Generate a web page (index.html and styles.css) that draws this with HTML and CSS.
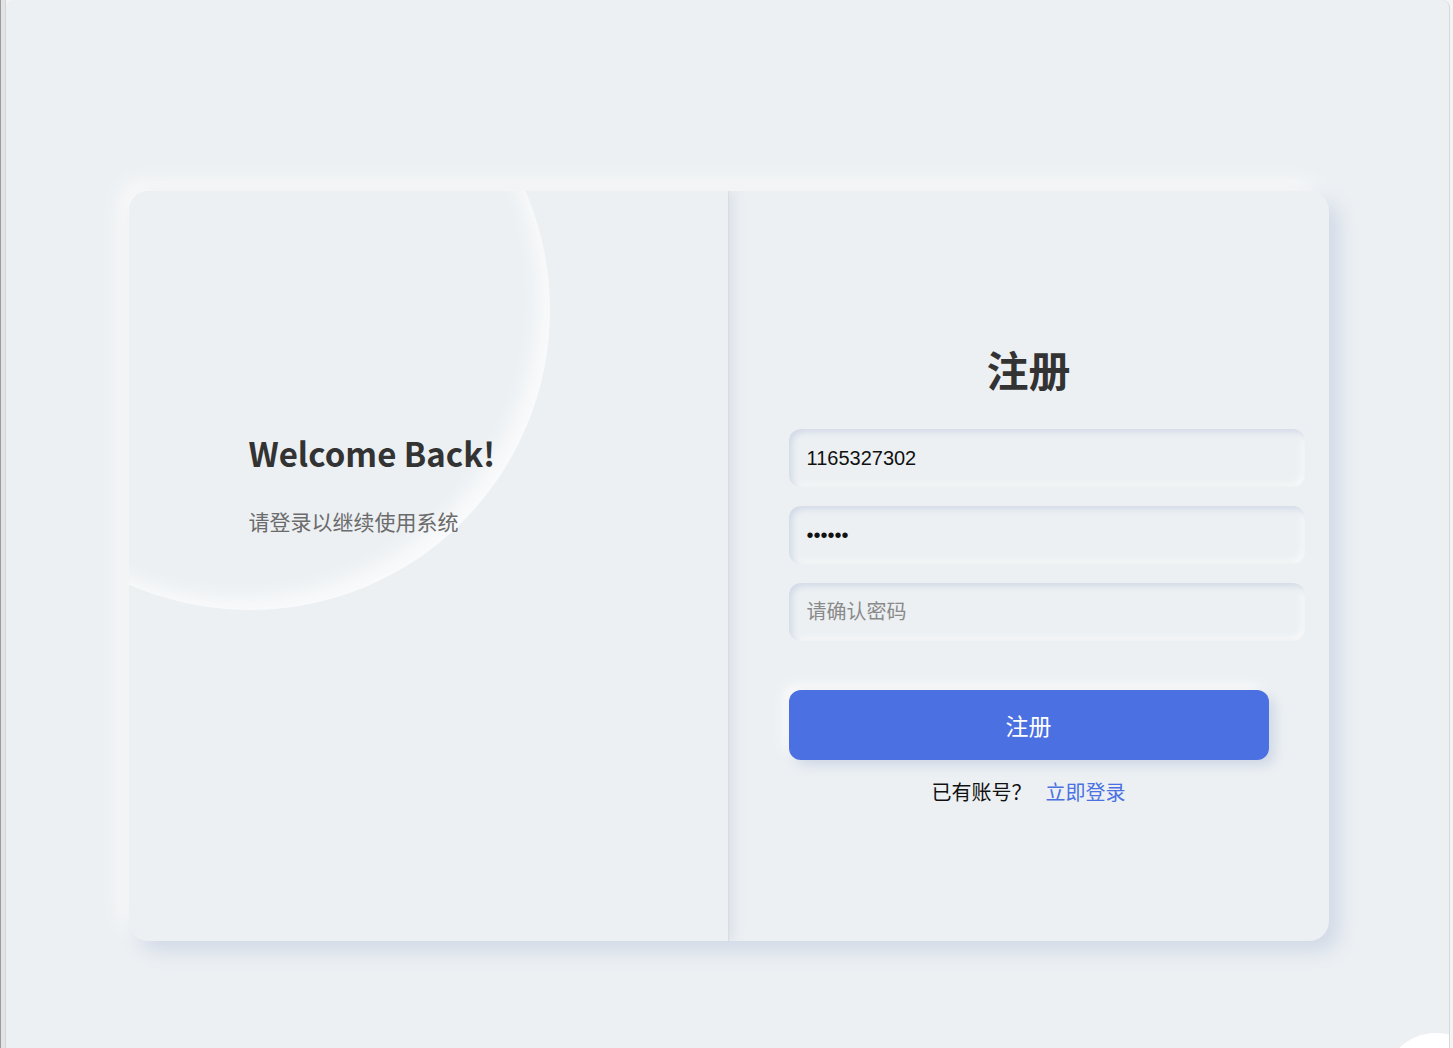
FILE: index.html
```html
<!DOCTYPE html>
<html lang="zh-CN">
<head>
<meta charset="utf-8">
<title>注册</title>
<link rel="stylesheet" href="styles.css">
</head>
<body>
  <div class="edge"></div>
  <div class="viewport">
    <div class="card">
      <section class="panel-left">
        <div class="circle"></div>
        <div class="welcome">
          <h2 class="welcome-title">Welcome Back!</h2>
          <p class="welcome-text">请登录以继续使用系统</p>
        </div>
      </section>
      <section class="panel-right">
        <form class="form">
          <h1 class="form-title">注册</h1>
          <input class="field" type="text" value="1165327302">
          <input class="field" type="password" value="123456">
          <input class="field" type="password" placeholder="请确认密码">
          <button class="submit" type="button">注册</button>
          <p class="switch-text">已有账号？<a class="switch-link" href="#">立即登录</a></p>
        </form>
      </section>
    </div>
    <div class="fab"></div>
  </div>
</body>
</html>
```
FILE: styles.css
```css
* { box-sizing: border-box; }
html, body { height: 100%; }
body {
  margin: 0;
  display: flex;
  background: #f4f4f4;
  font-family: "Noto Sans CJK SC", "Noto Sans", sans-serif;
  overflow: hidden;
}
.edge {
  width: 6px;
  flex: none;
  background: linear-gradient(to right, #9a9ca0 0 1px, #e3e4e6 1px 5px, #d4d6d9 5px 6px);
}
.viewport {
  position: relative;
  width: 1444px;
  flex: none;
  height: 100%;
  background: #ecf0f3;
  border-radius: 8px 8px 0 0;
  border-right: 1px solid #d6d8db;
  overflow: hidden;
  padding-top: 191px;
}
.card {
  width: 1200px;
  height: 750px;
  margin: 0 auto;
  display: flex;
  background: #ecf0f3;
  border-radius: 20px;
  overflow: hidden;
  box-shadow: 10px 10px 20px #d1d9e6, -10px -10px 20px #f9f9f9;
  transform: translateX(1px);
}
.panel-left {
  position: relative;
  width: 600px;
  flex: none;
  border-right: 1px solid #d9dde2;
  box-shadow: 4px 0 12px #d9dfe8;
  z-index: 1;
  background: #ecf0f3;
}
.circle {
  position: absolute;
  left: -179px;
  top: -181px;
  width: 600px;
  height: 600px;
  border-radius: 50%;
  background: #ecf0f3;
  box-shadow: inset -12px -12px 18px #f9fafb, inset 2px 2px 6px #f2f4f6;
}
.welcome {
  position: relative;
  padding: 242px 0 0 120px;
}
.welcome-title {
  margin: 0;
  font-size: 33px;
  line-height: 40px;
  font-weight: 700;
  color: #333333;
}
.welcome-text {
  margin: 32px 0 0;
  font-size: 21px;
  line-height: 32px;
  color: #6b6b6b;
}
.panel-right {
  flex: 1;
  display: flex;
  justify-content: center;
  padding-top: 152px;
}
.form {
  width: 480px;
  display: flex;
  flex-direction: column;
  align-items: flex-start;
}
.form-title {
  align-self: stretch;
  margin: 0 0 34px;
  text-align: center;
  font-size: 42px;
  line-height: 52px;
  font-weight: 700;
  color: #333333;
}
.field {
  width: 516px;
  height: 58px;
  margin: 0 0 19px;
  padding: 0 18px;
  border: none;
  outline: none;
  border-radius: 12px;
  background: #ecf0f3;
  font-family: "Liberation Sans", "Noto Sans CJK SC", sans-serif;
  font-size: 20px;
  color: #111;
  box-shadow: inset 3px 3px 6px #d1d9e6, inset -3px -3px 6px #f9f9f9;
}
.field::placeholder {
  color: #8a8a8a;
  font-family: "Noto Sans CJK SC", sans-serif;
}
.submit {
  margin-top: 30px;
  width: 480px;
  height: 70px;
  border: none;
  border-radius: 12px;
  background: #4b70e2;
  color: #ffffff;
  font-family: "Noto Sans CJK SC", sans-serif;
  font-size: 23px;
  box-shadow: 6px 6px 12px #d1d9e6, -6px -6px 12px #f9f9f9;
}
.switch-text {
  align-self: stretch;
  margin: 18px 0 0;
  text-align: center;
  font-size: 20px;
  line-height: 28px;
  color: #111;
}
.switch-link {
  margin-left: 14px;
  color: #4b70e2;
  text-decoration: none;
}
.fab {
  position: absolute;
  left: 1377px;
  top: 1033px;
  width: 106px;
  height: 106px;
  border-radius: 50%;
  background: #ffffff;
}
```
